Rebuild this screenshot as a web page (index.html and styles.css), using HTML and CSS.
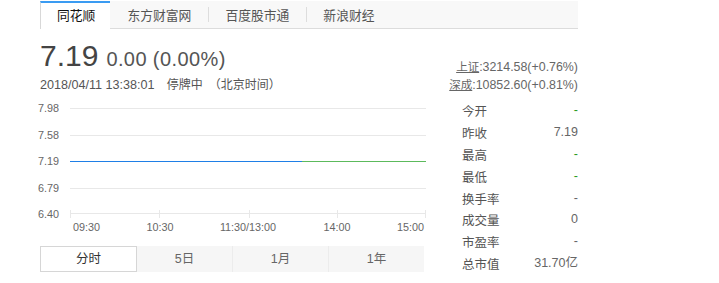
FILE: index.html
```html
<!DOCTYPE html>
<html>
<head>
<meta charset="utf-8">
<link rel="stylesheet" href="styles.css">
</head>
<body>
<div class="page">
  <div class="tabs">
    <div class="tab active">同花顺</div>
    <div class="tab">东方财富网</div>
    <div class="tab">百度股市通</div>
    <div class="tab">新浪财经</div>
  </div>
  <div class="header">
    <div class="quote">
      <div class="price-row"><span class="price">7.19</span><span class="change">0.00 (0.00%)</span></div>
      <div class="time-row"><span class="time">2018/04/11 13:38:01</span><span class="status">停牌中</span><span class="zone">（北京时间）</span></div>
    </div>
    <div class="indices">
      <div class="iline"><a class="idx">上证</a>:3214.58(+0.76%)</div>
      <div class="iline"><a class="idx">深成</a>:10852.60(+0.81%)</div>
    </div>
  </div>
  <div class="main">
    <div class="left">
      <svg class="chart" width="388" height="140" viewBox="0 0 388 140">
        <g class="grid">
          <line x1="32" y1="8.5" x2="388" y2="8.5"/>
          <line x1="32" y1="35.5" x2="388" y2="35.5"/>
          <line x1="32" y1="88.5" x2="388" y2="88.5"/>
          <line x1="32" y1="113.5" x2="388" y2="113.5"/>
          <line x1="32.5" y1="110" x2="32.5" y2="118"/>
          <line x1="121.5" y1="110" x2="121.5" y2="118"/>
          <line x1="211.5" y1="110" x2="211.5" y2="118"/>
          <line x1="299.5" y1="110" x2="299.5" y2="118"/>
          <line x1="387.5" y1="110" x2="387.5" y2="118"/>
        </g>
        <line class="line-blue" x1="32" y1="61.5" x2="264" y2="61.5"/>
        <line class="line-green" x1="264" y1="61.5" x2="388" y2="61.5"/>
        <g class="ylab">
          <text x="0" y="12">7.98</text>
          <text x="0" y="39">7.58</text>
          <text x="0" y="65">7.19</text>
          <text x="0" y="92">6.79</text>
          <text x="0" y="118">6.40</text>
        </g>
        <g class="xlab">
          <text x="35" y="131">09:30</text>
          <text x="122" y="131" text-anchor="middle">10:30</text>
          <text x="210" y="131" text-anchor="middle">11:30/13:00</text>
          <text x="299" y="131" text-anchor="middle">14:00</text>
          <text x="386" y="131" text-anchor="end">15:00</text>
        </g>
      </svg>
      <div class="periods">
        <div class="period active">分时</div>
        <div class="period">5日</div>
        <div class="period">1月</div>
        <div class="period">1年</div>
      </div>
    </div>
    <div class="stats">
      <div class="row"><span class="k">今开</span><span class="v green">-</span></div>
      <div class="row"><span class="k">昨收</span><span class="v">7.19</span></div>
      <div class="row"><span class="k">最高</span><span class="v green">-</span></div>
      <div class="row"><span class="k">最低</span><span class="v green">-</span></div>
      <div class="row"><span class="k">换手率</span><span class="v">-</span></div>
      <div class="row"><span class="k">成交量</span><span class="v">0</span></div>
      <div class="row"><span class="k">市盈率</span><span class="v">-</span></div>
      <div class="row"><span class="k">总市值</span><span class="v">31.70亿</span></div>
    </div>
  </div>
</div>
</body>
</html>
```

FILE: styles.css
```css
* { box-sizing: border-box; }
html, body { margin: 0; padding: 0; background: #fff; }
body {
  font-family: "Liberation Sans", Arial, "Noto Sans CJK SC", sans-serif;
  color: #555;
}
.page {
  width: 578px;
  padding-left: 40px;
  padding-top: 1px;
}
.tabs {
  display: flex;
  height: 28px;
  background: #f8f8f8;
  border-bottom: 1px solid #dcdcdc;
}
.tab {
  position: relative;
  padding: 0 17px;
  font-size: 12.8px;
  line-height: 27px;
  color: #555;
  font-family: "Noto Sans CJK SC", sans-serif;
}
.tab + .tab::before {
  content: "";
  position: absolute;
  left: 0;
  top: 6px;
  height: 15px;
  border-left: 1px solid #ddd;
}
.tab.active + .tab::before { display: none; }
.tab.active {
  background: #fff;
  color: #111;
  border-top: 2px solid #3a9bf2;
  border-left: 1px solid #d8d8d8;
  margin-bottom: -1px;
  height: 28px;
  line-height: 24px;
  padding: 0 15px 0 16px;
}
.header {
  display: flex;
  justify-content: space-between;
  align-items: flex-start;
  margin-top: 10px;
}
.price-row {
  display: flex;
  align-items: baseline;
  height: 34px;
  line-height: 34px;
}
.price {
  font-size: 30px;
  color: #444;
}
.change {
  font-size: 20px;
  letter-spacing: 0.4px;
  color: #555;
  margin-left: 8px;
}
.time-row {
  margin-top: 3px;
  font-size: 12.6px;
  line-height: 15px;
  color: #555;
}
.status { margin-left: 12px; font-family: "Noto Sans CJK SC", sans-serif; font-size: 12px; }
.zone { margin-left: 6px; font-family: "Noto Sans CJK SC", sans-serif; font-size: 12px; }
.indices {
  text-align: right;
  font-size: 12.4px;
  color: #666;
  padding-top: 18px;
}
.iline {
  height: 18px;
  line-height: 18px;
}
.idx {
  text-decoration: underline;
  color: #666;
  font-family: "Noto Sans CJK SC", sans-serif;
  font-size: 11.5px;
}
.main {
  display: flex;
  justify-content: space-between;
  margin-top: 7px;
}
.left {
  width: 388px;
  margin-left: -2px;
}
.chart { display: block; }
.grid line { stroke: #e8e8e8; stroke-width: 1; }
.line-blue { stroke: #1f7fe6; stroke-width: 1; }
.line-green { stroke: #5cba5c; stroke-width: 1; }
.ylab text, .xlab text {
  font-family: "Liberation Sans", Arial, sans-serif;
  font-size: 10.8px;
  fill: #666;
}
.periods {
  display: flex;
  margin-top: 6px;
  margin-left: 2px;
  width: 384px;
  height: 26px;
  background: #f6f6f6;
}
.period {
  flex: 1;
  text-align: center;
  font-size: 12.5px;
  line-height: 26px;
  color: #666;
  font-family: "Liberation Sans", "Noto Sans CJK SC", sans-serif;
  border-left: 1px solid #ececec;
}
.period:nth-child(2) { border-left: none; }
.period.active {
  background: #fff;
  color: #333;
  border: 1px solid #d6d6d6;
  line-height: 24px;
}
.stats {
  width: 130px;
}
.row {
  display: flex;
  justify-content: space-between;
  height: 21.9px;
  line-height: 21.9px;
  padding-left: 14px;
  font-size: 12.5px;
}
.k {
  color: #555;
  font-family: "Noto Sans CJK SC", sans-serif;
  font-size: 12.5px;
}
.v { color: #666; }
.v.green { color: #2a9a1a; }
```
